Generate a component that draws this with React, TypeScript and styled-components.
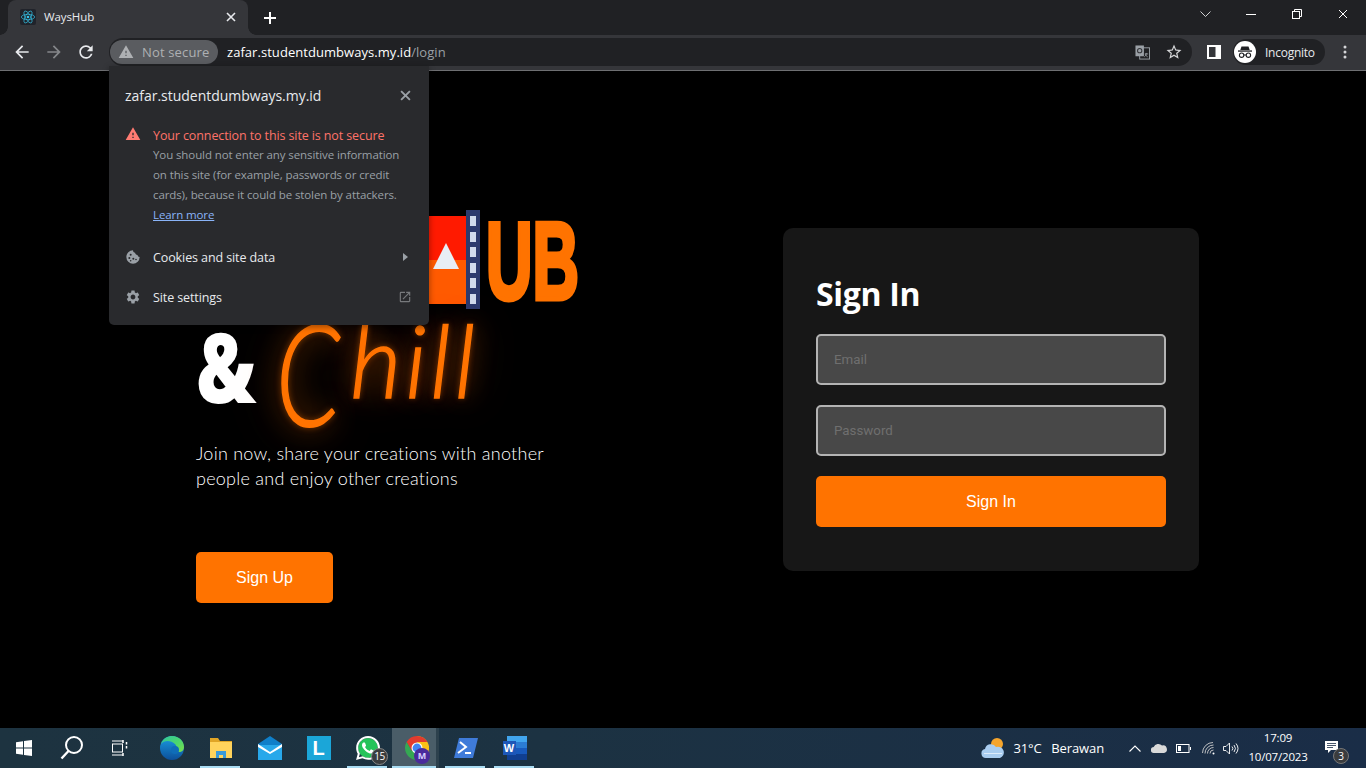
import React from "react";
import styled, { createGlobalStyle } from "styled-components";
import { SiWhatsapp } from "react-icons/si";

const Global = createGlobalStyle`
  html, body { margin: 0; padding: 0; background: #000; overflow: hidden; }
  * { box-sizing: border-box; }
`;

const ui = `"Open Sans", "Noto Sans", sans-serif`;
const orange = "#ff7300";

const Screen = styled.div`
  position: relative;
  width: 1366px;
  height: 768px;
  display: flex;
  flex-direction: column;
  font-family: ${ui};
  overflow: hidden;
`;

/* ---------- browser chrome ---------- */
const TabStrip = styled.div`
  height: 35px;
  flex: none;
  background: #202124;
  display: flex;
  align-items: stretch;
  padding-left: 8px;
`;
const Tab = styled.div`
  position: relative;
  width: 240px;
  background: #35363a;
  border-radius: 8px 8px 0 0;
  display: flex;
  align-items: center;
  padding: 0 9px 2px 12px;
  color: #e8eaed;
  font-size: 11.5px;
  &::before, &::after {
    content: "";
    position: absolute;
    bottom: 0;
    width: 8px;
    height: 8px;
    background: radial-gradient(circle at 0 0, #202124 7.5px, #35363a 8px);
  }
  &::before { left: -8px; }
  &::after { right: -8px; background: radial-gradient(circle at 100% 0, #202124 7.5px, #35363a 8px); }
`;
const Favicon = styled.span`
  width: 16px;
  height: 16px;
  border-radius: 2px;
  background: #20232a;
  display: flex;
  margin-right: 8px;
`;
const TabTitle = styled.span`
  flex: 1;
  letter-spacing: -0.1px;
`;
const IconBtn = styled.span<{ $w?: number; $c?: string; $ml?: number }>`
  width: ${(p) => p.$w ?? 16}px;
  margin-left: ${(p) => p.$ml ?? 0}px;
  flex: none;
  display: flex;
  align-items: center;
  justify-content: center;
  color: ${(p) => p.$c ?? "#e8eaed"};
`;
const NewTab = styled.span`
  width: 24px;
  margin-left: 10px;
  display: flex;
  align-items: center;
  justify-content: center;
  color: #fff;
`;
const WindowButtons = styled.div`
  margin-left: auto;
  display: flex;
  align-items: center;
  padding-bottom: 7px;
`;

const Toolbar = styled.div`
  height: 36px;
  flex: none;
  background: #35363a;
  border-bottom: 1px solid #6e6f72;
  display: flex;
  align-items: center;
  padding: 0 0 1px 6px;
`;
const NavBtn = styled.span<{ $c?: string }>`
  width: 32px;
  height: 28px;
  display: flex;
  align-items: center;
  justify-content: center;
  color: ${(p) => p.$c ?? "#e8eaed"};
`;
const Omnibox = styled.div`
  width: 1083px;
  height: 28px;
  margin-left: 7px;
  border-radius: 14px;
  background: #202124;
  display: flex;
  align-items: center;
  padding: 0 9px 0 1px;
  font-size: 13px;
`;
const Pill = styled.div`
  width: 108px;
  height: 24px;
  border-radius: 12px;
  background: #5a5c60;
  color: #aeb0b3;
  display: flex;
  align-items: center;
  gap: 8px;
  padding-left: 8px;
  letter-spacing: 0.15px;
`;
const Url = styled.span`
  margin-left: 9px;
  color: #fff;
  letter-spacing: 0.05px;
  flex: 1;
`;
const UrlPath = styled.span`
  color: #9aa0a6;
`;
const OmniIcons = styled.div`
  display: flex;
  align-items: center;
  gap: 15px;
`;
const Chip = styled.div`
  width: 92px;
  height: 26px;
  margin-left: 12px;
  border-radius: 13px;
  background: #202124;
  color: #e8eaed;
  display: flex;
  align-items: center;
  gap: 9px;
  padding-left: 1px;
  font-size: 12px;
  letter-spacing: -0.25px;
`;

/* ---------- page ---------- */
const Page = styled.main`
  flex: 1;
  background: #000;
  display: flex;
  align-items: center;
  padding-left: 196px;
`;
const Hero = styled.section`
  width: 587px;
  align-self: flex-start;
  padding-top: 139px;
  display: flex;
  flex-direction: column;
`;
const LogoRow = styled.div`
  height: 100px;
  padding-left: 200px;
  display: flex;
  align-items: flex-start;
`;
const Ub = styled.span`
  display: block;
  margin: -4px 0 0 6px;
  font: 700 110px/110px "Liberation Sans", sans-serif;
  color: ${orange};
  -webkit-text-stroke: 5px ${orange};
  transform: scaleX(0.585);
  transform-origin: left top;
`;
const ChillRow = styled.div`
  height: 119px;
  margin-top: 12px;
  display: flex;
  align-items: flex-start;
`;
const Amp = styled.span`
  font: 800 98px/72px "Open Sans", sans-serif;
  color: #fff;
  width: 80px;
  margin-top: 7px;
  transform: scaleX(0.77);
  transform-origin: left top;
`;
const Chill = styled.span`
  display: flex;
  align-items: flex-start;
  font: italic 300 100px/72px Lato, sans-serif;
  color: ${orange};
  -webkit-text-stroke: 1.4px ${orange};
  text-shadow: 0 0 6px rgba(255, 115, 0, 0.55), 0 0 24px rgba(255, 115, 0, 0.55), 0 0 44px rgba(255, 115, 0, 0.4);
`;
const ChillInitial = styled.span`
  width: 74px;
  font-size: 102px;
  transform: scaleY(1.38);
  transform-origin: left top;
`;
const ChillRest = styled.span`
  margin-top: 1px;
  letter-spacing: 3.6px;
`;
const Lead = styled.p`
  margin: 0;
  color: #fff;
  font: 300 18px/25px Lato, sans-serif;
  letter-spacing: 0.25px;
`;
const OrangeButton = styled.button<{ $w: number }>`
  width: ${(p) => p.$w}px;
  height: 51px;
  border: 0;
  border-radius: 5px;
  background: ${orange};
  color: #fff;
  font: 400 16px "Liberation Sans", Arial, sans-serif;
  padding: 0;
`;
const SignUp = styled(OrangeButton)`
  margin-top: 61px;
`;
const Card = styled.form`
  width: 416px;
  height: 343px;
  border-radius: 10px;
  background: #171717;
  padding: 44px 33px 0;
  display: flex;
  flex-direction: column;
`;
const CardTitle = styled.h1`
  margin: 0 0 19px;
  height: 43px;
  color: #fff;
  font: 700 32px/43px "Open Sans", sans-serif;
  letter-spacing: -0.3px;
`;
const Field = styled.input`
  width: 350px;
  height: 51px;
  margin-bottom: 20px;
  padding: 0 16px;
  border: 2px solid #b4b4b4;
  border-radius: 5px;
  background: #484848;
  color: #fff;
  font: 400 13.33px Roboto, sans-serif;
  outline: 0;
  &::placeholder { color: #6f6f6f; opacity: 1; }
`;

/* ---------- security popup ---------- */
const Popup = styled.aside`
  position: absolute;
  left: 109px;
  top: 66px;
  width: 320px;
  height: 259px;
  background: #292a2d;
  border-radius: 0 0 5px 5px;
  box-shadow: 0 2px 6px rgba(0, 0, 0, 0.4);
  padding: 19px 16px 0;
  color: #e8eaed;
`;
const PopHead = styled.div`
  height: 20px;
  display: flex;
  align-items: center;
  justify-content: space-between;
  font-size: 14px;
  letter-spacing: -0.02px;
`;
const Warn = styled.div`
  margin-top: 21px;
  display: flex;
  gap: 12px;
`;
const WarnText = styled.div`
  width: 260px;
  font-size: 11.5px;
  line-height: 20px;
  color: #9aa0a6;
  letter-spacing: -0.1px;
  white-space: nowrap;
`;
const WarnTitle = styled.div`
  font-size: 12.5px;
  letter-spacing: -0.11px;
  color: #ff7369;
  margin-bottom: -1px;
`;
const Learn = styled.a`
  color: #8ab4f8;
  text-decoration: underline;
  display: block;
`;
const MenuRow = styled.div<{ $top: number }>`
  height: 20px;
  margin-top: ${(p) => p.$top}px;
  display: flex;
  align-items: center;
  gap: 12px;
  font-size: 12.5px;
  letter-spacing: -0.1px;
  color: #e8eaed;
`;
const MenuLabel = styled.span`
  flex: 1;
`;
const MenuEnd = styled.span`
  width: 16px;
  display: flex;
  justify-content: center;
`;

/* ---------- taskbar ---------- */
const Taskbar = styled.footer`
  height: 40px;
  flex: none;
  background: linear-gradient(90deg, #1d3340 0%, #1c3242 40%, #1a2d47 100%);
  display: flex;
  align-items: stretch;
  color: #fff;
  font-size: 12px;
`;
const Slot = styled.div<{ $w?: number; $on?: boolean; $active?: boolean; $ml?: number }>`
  position: relative;
  width: ${(p) => p.$w ?? 49}px;
  margin-left: ${(p) => p.$ml ?? 0}px;
  flex: none;
  display: flex;
  align-items: center;
  justify-content: center;
  background: ${(p) =>
    p.$active
      ? "linear-gradient(90deg, #4a5d68 44px, #2d414d 44px, #2d414d 47px, transparent 47px)"
      : "transparent"};
  &::after {
    content: "";
    display: ${(p) => (p.$on ? "block" : "none")};
    position: absolute;
    bottom: 0;
    left: ${(p) => (p.$active ? 0 : 4)}px;
    right: 5px;
    height: 2px;
    background: #a9dcf3;
  }
`;
const Count = styled.span`
  position: absolute;
  left: 28px;
  top: 20px;
  width: 17px;
  height: 17px;
  border-radius: 50%;
  background: #3a3c3e;
  border: 1px solid #888;
  font-size: 10px;
  line-height: 15px;
  text-align: center;
  color: #fff;
  letter-spacing: -0.5px;
`;
const Avatar = styled.span`
  position: absolute;
  left: 22px;
  top: 20px;
  width: 16px;
  height: 16px;
  border-radius: 50%;
  background: #4a2a9c;
  font-size: 9px;
  font-weight: 700;
  line-height: 16px;
  text-align: center;
  color: #d8cfff;
`;
const LTile = styled.span`
  width: 24px;
  height: 24px;
  background: #1ba6d8;
  display: flex;
  align-items: center;
  justify-content: center;
  color: #fff;
  font: 700 20px "Liberation Sans", sans-serif;
`;
const WordDoc = styled.span`
  position: relative;
  width: 24px;
  height: 24px;
  display: flex;
  flex-direction: column;
  padding-left: 4px;
`;
const WordStripe = styled.span<{ $c: string }>`
  flex: 1;
  background: ${(p) => p.$c};
`;
const WordBadge = styled.span`
  position: absolute;
  left: 0;
  top: 5px;
  width: 13px;
  height: 14px;
  background: #1d57b8;
  color: #fff;
  font: 700 11px/14px "Liberation Sans", sans-serif;
  text-align: center;
`;
const Tray = styled.div`
  margin-left: auto;
  display: flex;
  align-items: center;
  padding-right: 15px;
`;
const TrayIcon = styled.span<{ $w: number }>`
  width: ${(p) => p.$w}px;
  display: flex;
  justify-content: center;
  flex: none;
`;
const Weather = styled.span`
  margin: 0 16px 0 8px;
  font-size: 13px;
  letter-spacing: -0.12px;
  white-space: nowrap;
`;
const Clock = styled.div`
  width: 66px;
  text-align: center;
  font-size: 11.5px;
  line-height: 19px;
  letter-spacing: -0.2px;
  padding-bottom: 3px;
  white-space: nowrap;
`;
const Notif = styled.span`
  position: relative;
  width: 40px;
  margin-top: -3px;
  display: flex;
  justify-content: center;
`;
const NotifCount = styled.span`
  position: absolute;
  left: 22px;
  top: 7px;
  width: 16px;
  height: 16px;
  border-radius: 50%;
  background: #3a3c3e;
  border: 1px solid #777;
  font-size: 10px;
  line-height: 14px;
  text-align: center;
`;

const Ic = ({ d, s = 16, c = "currentColor" }: { d: string; s?: number; c?: string }) => (
  <svg width={s} height={s} viewBox="0 0 24 24" fill={c} fillRule="evenodd"><path d={d} /></svg>
);
const CloseX = ({ s = 10, w = 1.6, c = "currentColor" }: { s?: number; w?: number; c?: string }) => (
  <svg width={s} height={s} viewBox="0 0 10 10" stroke={c} strokeWidth={w} fill="none"><path d="M1 1l8 8M9 1l-8 8" /></svg>
);

const P = {
  back: "M20 11H7.83l5.59-5.59L12 4l-8 8 8 8 1.41-1.41L7.83 13H20v-2z",
  fwd: "M4 11h12.17l-5.59-5.59L12 4l8 8-8 8-1.41-1.41L16.17 13H4v-2z",
  reload: "M17.65 6.35A7.958 7.958 0 0012 4c-4.42 0-7.99 3.58-7.99 8s3.57 8 7.99 8c3.73 0 6.84-2.55 7.73-6h-2.08A5.99 5.99 0 0112 18c-3.31 0-6-2.69-6-6s2.69-6 6-6c1.66 0 3.14.69 4.22 1.78L13 11h7V4l-2.35 2.35z",
  warn: "M1 21h22L12 2 1 21zm12-3h-2v-2h2v2zm0-4h-2v-4h2v4z",
  star: "M22 9.24l-7.19-.62L12 2 9.19 8.63 2 9.24l5.46 4.73L5.82 21 12 17.27 18.18 21l-1.63-7.03L22 9.24zM12 15.4l-3.76 2.27 1-4.28-3.32-2.88 4.38-.38L12 6.1l1.71 4.04 4.38.38-3.32 2.88 1 4.28L12 15.4z",
  gear: "M19.14 12.94c.04-.3.06-.61.06-.94 0-.32-.02-.64-.07-.94l2.03-1.58c.18-.14.23-.41.12-.61l-1.92-3.32c-.12-.22-.37-.29-.59-.22l-2.39.96c-.5-.38-1.03-.7-1.62-.94l-.36-2.54c-.04-.24-.24-.41-.48-.41h-3.84c-.24 0-.43.17-.47.41l-.36 2.54c-.59.24-1.13.57-1.62.94l-2.39-.96c-.22-.08-.47 0-.59.22L2.74 8.87c-.12.21-.08.47.12.61l2.03 1.58c-.05.3-.09.63-.09.94s.02.64.07.94l-2.03 1.58c-.18.14-.23.41-.12.61l1.92 3.32c.12.22.37.29.59.22l2.39-.96c.5.38 1.03.7 1.62.94l.36 2.54c.05.24.24.41.48.41h3.84c.24 0 .44-.17.47-.41l.36-2.54c.59-.24 1.13-.56 1.62-.94l2.39.96c.22.08.47 0 .59-.22l1.92-3.32c.12-.22.07-.47-.12-.61l-2.01-1.58zM12 15.6c-1.98 0-3.6-1.62-3.6-3.6s1.62-3.6 3.6-3.6 3.6 1.62 3.6 3.6-1.62 3.6-3.6 3.6z",
  open: "M19 19H5V5h7V3H5a2 2 0 00-2 2v14a2 2 0 002 2h14c1.1 0 2-.9 2-2v-7h-2v7zM14 3v2h3.59l-9.83 9.83 1.41 1.41L19 6.41V10h2V3h-7z",
  cookie: "M12 2a10 10 0 1010 10c-1.8 0-3-1.2-3.2-3-1.9.1-3.6-1.4-3.7-3.2C13.3 5.6 12 4 12 2zM8.5 7a1.5 1.5 0 110 3 1.5 1.5 0 010-3zm-2 5a1.5 1.5 0 110 3 1.5 1.5 0 010-3zm6 1a1.5 1.5 0 110 3 1.5 1.5 0 010-3zm-4 3.5a1.2 1.2 0 110 2.4 1.2 1.2 0 010-2.4zm8 -2a1.2 1.2 0 110 2.4 1.2 1.2 0 010-2.4z",
};

const ReactIcon = () => (
  <svg width="16" height="16" viewBox="-12 -12 24 24" fill="none" stroke="#35c3e8" strokeWidth="1">
    <circle r="2" fill="#35c3e8" stroke="none" />
    <ellipse rx="10" ry="4" />
    <ellipse rx="10" ry="4" transform="rotate(60)" />
    <ellipse rx="10" ry="4" transform="rotate(120)" />
  </svg>
);

const Translate = () => (
  <svg width="15" height="15" viewBox="0 0 16 16">
    <rect x="5" y="3" width="10.5" height="12" fill="none" stroke="#9aa0a6" strokeWidth="1" />
    <rect x="0.5" y="0.5" width="9" height="11.5" fill="#9aa0a6" />
    <circle cx="5" cy="6" r="2.3" fill="none" stroke="#35363a" strokeWidth="1.1" />
    <path d="M10.5 9.5h3.5M12 8.5c0 2-1 3.5-2 4M11 10c.4 1.2 1.4 2.2 2.5 2.6" fill="none" stroke="#9aa0a6" strokeWidth="0.9" />
  </svg>
);

const Incognito = () => (
  <svg width="22" height="22" viewBox="0 0 22 22">
    <circle cx="11" cy="11" r="11" fill="#fff" />
    <path d="M7.5 5.5h7l1.2 3.6H6.3z" fill="#202124" />
    <rect x="4" y="9.4" width="14" height="1.3" fill="#202124" />
    <circle cx="7.6" cy="14.2" r="2.2" fill="none" stroke="#202124" strokeWidth="1.1" />
    <circle cx="14.4" cy="14.2" r="2.2" fill="none" stroke="#202124" strokeWidth="1.1" />
    <path d="M9.8 14h2.4" stroke="#202124" strokeWidth="1.1" />
  </svg>
);

const Edge = () => (
  <svg width="24" height="24" viewBox="0 0 24 24">
    <defs>
      <linearGradient id="eg" x1="0" y1="0" x2="1" y2="1">
        <stop offset="0" stopColor="#2fc4a0" />
        <stop offset="0.6" stopColor="#4fd86a" />
        <stop offset="1" stopColor="#7ee04a" />
      </linearGradient>
      <linearGradient id="eb" x1="0" y1="0" x2="0" y2="1">
        <stop offset="0" stopColor="#1b9de2" />
        <stop offset="1" stopColor="#0c4f9a" />
      </linearGradient>
    </defs>
    <circle cx="12" cy="12" r="12" fill="url(#eb)" />
    <path d="M1 8C3 2 8 0 12 0c7 0 12 5 12 11 0 3-2 5-5 5-2 0-4-1-4-2 2-1 2-4 0-6C11 4 4 4 1 8z" fill="url(#eg)" />
    <circle cx="15" cy="14" r="4" fill="#0f6db8" />
  </svg>
);
const Folder = () => (
  <svg width="22" height="20" viewBox="0 0 22 20">
    <path d="M0 0h8l2 3h12v2H0z" fill="#e0a526" />
    <rect y="4" width="22" height="16" fill="#ffd35c" />
    <path d="M6 20v-7h10v7h-3v-3H9v3z" fill="#3a9ad9" />
  </svg>
);
const Mail = () => (
  <svg width="24" height="24" viewBox="0 0 24 24">
    <path d="M0 8L12 0l12 8v16H0z" fill="#0f7fc9" />
    <rect y="9" width="24" height="15" fill="#28a8ea" />
    <path d="M0 8l12 8 12-8v3L12 18 0 11z" fill="#fff" />
  </svg>
);
const Whats = () => (
  <svg width="24" height="24" viewBox="0 0 24 24">
    <circle cx="12" cy="12" r="10" fill="#25c35a" />
    <foreignObject width="24" height="24"><SiWhatsapp size={24} color="#fff" /></foreignObject>
  </svg>
);
const ChromeLogo = () => (
  <svg width="24" height="24" viewBox="-12 -12 24 24">
    <path d="M0-12A12 12 0 0 1 10.4-6H0z" fill="#f4b400" />
    <path d="M0-12A12 12 0 0 0-10.4-6L-5.2 3 0-6H10.4A12 12 0 0 0 0-12z" fill="#e33b2e" />
    <path d="M-10.4-6A12 12 0 0 0-1.5 11.9L3.5 3-5.2 3z" fill="#35a853" />
    <path d="M10.4-6H0L5.2 3-1.5 11.9A12 12 0 0 0 10.4-6z" fill="#fbc116" />
    <circle r="5.5" fill="#fff" />
    <circle r="4.4" fill="#4285f4" />
  </svg>
);
const Shell = () => (
  <svg width="24" height="20" viewBox="0 0 24 20">
    <path d="M5 0h19l-5 20H0z" fill="#3f7bd9" />
    <path d="M6 4l6 5-8 6" fill="none" stroke="#fff" strokeWidth="2" />
    <path d="M11 15h6" stroke="#fff" strokeWidth="2" />
  </svg>
);
const StartLogo = () => (
  <svg width="16" height="16" viewBox="0 0 16 16" fill="#fff">
    <path d="M0 2.3l7-1v6.3H0zM8 1.1L16 0v7.6H8zM0 8.5h7v6.3l-7-1zM8 8.5h8V16l-8-1.1z" />
  </svg>
);
const SearchIc = () => (
  <svg width="24" height="24" viewBox="0 0 24 24" fill="none" stroke="#fff" strokeWidth="2">
    <circle cx="14" cy="9" r="8" />
    <path d="M8.5 15L1.5 22.5" strokeWidth="2.4" />
  </svg>
);
const TaskView = () => (
  <svg width="16" height="16" viewBox="0 0 16 16" fill="none" stroke="#fff" strokeWidth="1">
    <path d="M0 1h11M0 15h11" />
    <rect x="0.5" y="4" width="10" height="8" />
    <path d="M11 0v3M11 13v3M14.5 2v2.5M14.5 6v2.5" strokeWidth="1.5" />
  </svg>
);
const WeatherIc = () => (
  <svg width="24" height="22" viewBox="0 0 24 22">
    <circle cx="16" cy="7" r="6" fill="#f6a52c" />
    <path d="M5 21a4.5 4.5 0 01-1-8.9A6 6 0 0115 10a5 5 0 014 11z" fill="#a9cdf0" />
    <path d="M3 16h18v1H3z" fill="#ddecfb" />
  </svg>
);
const TrayGlyphs = {
  chevron: <svg width="12" height="7" viewBox="0 0 12 7" fill="none" stroke="#fff" strokeWidth="1.1"><path d="M.5 6.5L6 1l5.5 5.5" /></svg>,
  cloud: <svg width="16" height="10" viewBox="0 0 16 10" fill="#d9d9d9"><path d="M3 10a3 3 0 01-.3-6A5 5 0 0111 2.5 3.8 3.8 0 0113 10z" /></svg>,
  battery: (
    <svg width="15" height="9" viewBox="0 0 15 9" fill="none" stroke="#fff">
      <rect x="0.5" y="0.5" width="12.5" height="8" />
      <path d="M14.5 3v3" />
      <rect x="2" y="2" width="3" height="5" fill="#fff" stroke="none" />
    </svg>
  ),
  wifi: (
    <svg width="13" height="13" viewBox="0 0 13 13" fill="none" stroke="#cfcfcf" strokeWidth="0.9">
      <path d="M.5 11A10.5 10.5 0 0111 .5M3 11.5A8.5 8.5 0 0111.5 3M5.5 11.5A6 6 0 0111.5 5.5M8 11.5A3.5 3.5 0 0111.5 8" />
      <circle cx="11.5" cy="11.5" r="1" fill="#fff" stroke="none" />
    </svg>
  ),
  speaker: (
    <svg width="16" height="13" viewBox="0 0 16 13" fill="none" stroke="#fff" strokeWidth="0.9">
      <path d="M.5 4.5h2.5L6.5 1v11L3 8.5H.5z" />
      <path d="M9 4.5a3 3 0 010 4M11 3a5.5 5.5 0 010 7M13 1.5a8 8 0 010 10" />
    </svg>
  ),
};

export default function App() {
  return (
    <Screen>
      <Global />
      <TabStrip>
        <Tab>
          <Favicon><ReactIcon /></Favicon>
          <TabTitle>WaysHub</TabTitle>
          <IconBtn><CloseX /></IconBtn>
        </Tab>
        <NewTab>
          <svg width="12" height="12" viewBox="0 0 12 12" stroke="#fff" strokeWidth="2"><path d="M6 0v12M0 6h12" /></svg>
        </NewTab>
        <WindowButtons>
          <IconBtn $w={46}><svg width="11" height="6" viewBox="0 0 11 6" fill="none" stroke="#cfd0d2"><path d="M.5.5l5 5 5-5" /></svg></IconBtn>
          <IconBtn $w={46}><svg width="10" height="1" viewBox="0 0 10 1"><rect width="10" height="1" fill="#fff" /></svg></IconBtn>
          <IconBtn $w={46}><svg width="10" height="10" viewBox="0 0 10 10" fill="none" stroke="#fff"><path d="M2.5 2V.5h7v7H8" /><rect x="0.5" y="2.5" width="7" height="7" /></svg></IconBtn>
          <IconBtn $w={46}><CloseX c="#fff" s={10} w={1} /></IconBtn>
        </WindowButtons>
      </TabStrip>
      <Toolbar>
        <NavBtn><Ic d={P.back} s={20} /></NavBtn>
        <NavBtn $c="#85878a"><Ic d={P.fwd} s={20} /></NavBtn>
        <NavBtn><Ic d={P.reload} s={20} /></NavBtn>
        <Omnibox>
          <Pill><Ic d={P.warn} s={16} c="#aeb0b3" /><span>Not secure</span></Pill>
          <Url>zafar.studentdumbways.my.id<UrlPath>/login</UrlPath></Url>
          <OmniIcons>
            <Translate />
            <Ic d={P.star} s={18} c="#d5d6d8" />
          </OmniIcons>
        </Omnibox>
        <IconBtn $w={14} $ml={15}>
          <svg width="14" height="14" viewBox="0 0 14 14"><rect width="14" height="14" fill="#fff" /><rect x="2" y="2" width="6.5" height="10" fill="#35363a" /></svg>
        </IconBtn>
        <Chip><Incognito /><span>Incognito</span></Chip>
        <IconBtn $w={20} $c="#e8eaed" $ml={10}>
          <svg width="4" height="14" viewBox="0 0 4 14" fill="#d5d6d8"><circle cx="2" cy="2" r="1.5" /><circle cx="2" cy="7" r="1.5" /><circle cx="2" cy="12" r="1.5" /></svg>
        </IconBtn>
      </Toolbar>

      <Page>
        <Hero>
          <LogoRow>
            <svg width="84" height="100" viewBox="0 0 84 100">
              <rect x="0" y="6" width="70" height="44" fill="#ff1a00" />
              <rect x="0" y="50" width="70" height="44" fill="#ff5a00" />
              <path d="M50 33l13 26H37z" fill="#e8eef5" />
              <rect x="70" y="0" width="14" height="99" fill="#2c3a6e" />
              {[6, 22, 37, 53, 68, 84].map((y) => (
                <rect key={y} x="74" y={y} width="6" height="10" fill="#d0daec" />
              ))}
            </svg>
            <Ub>UB</Ub>
          </LogoRow>
          <ChillRow>
            <Amp>&amp;</Amp>
            <Chill><ChillInitial>C</ChillInitial><ChillRest>hill</ChillRest></Chill>
          </ChillRow>
          <Lead>Join now, share your creations with another<br />people and enjoy other creations</Lead>
          <SignUp type="button" $w={137}>Sign Up</SignUp>
        </Hero>
        <Card>
          <CardTitle>Sign In</CardTitle>
          <Field placeholder="Email" />
          <Field placeholder="Password" />
          <OrangeButton type="button" $w={350}>Sign In</OrangeButton>
        </Card>
      </Page>

      <Taskbar>
        <Slot $w={48}><StartLogo /></Slot>
        <Slot $w={48}><SearchIc /></Slot>
        <Slot $w={48}><TaskView /></Slot>
        <Slot $ml={3}><Edge /></Slot>
        <Slot $on><Folder /></Slot>
        <Slot><Mail /></Slot>
        <Slot><LTile>L</LTile></Slot>
        <Slot $on><Whats /><Count>15</Count></Slot>
        <Slot $on $active><ChromeLogo /><Avatar>M</Avatar></Slot>
        <Slot $on><Shell /></Slot>
        <Slot $on>
          <WordDoc>
            <WordStripe $c="#41a5ee" />
            <WordStripe $c="#2b7cd3" />
            <WordStripe $c="#185abd" />
            <WordStripe $c="#103f91" />
            <WordBadge>W</WordBadge>
          </WordDoc>
        </Slot>
        <Tray>
          <WeatherIc />
          <Weather>31°C&nbsp;&nbsp;&nbsp;Berawan</Weather>
          <TrayIcon $w={30}>{TrayGlyphs.chevron}</TrayIcon>
          <TrayIcon $w={18}>{TrayGlyphs.cloud}</TrayIcon>
          <TrayIcon $w={31}>{TrayGlyphs.battery}</TrayIcon>
          <TrayIcon $w={18}>{TrayGlyphs.wifi}</TrayIcon>
          <TrayIcon $w={28}>{TrayGlyphs.speaker}</TrayIcon>
          <Clock>17:09<br />10/07/2023</Clock>
          <Notif>
            <svg width="13" height="12" viewBox="0 0 13 12" fill="#fff"><path d="M0 0h13v9H6l-3 3V9H0z" /><path d="M2 2.5h9M2 4.5h9M2 6.5h6" stroke="#1a2d47" strokeWidth="0.8" /></svg>
            <NotifCount>3</NotifCount>
          </Notif>
        </Tray>
      </Taskbar>

      <Popup>
        <PopHead>
          <span>zafar.studentdumbways.my.id</span>
          <IconBtn $w={16} $c="#9aa0a6"><CloseX s={11} w={1.7} /></IconBtn>
        </PopHead>
        <Warn>
          <Ic d={P.warn} s={16} c="#ff7b72" />
          <WarnText>
            <WarnTitle>Your connection to this site is not secure</WarnTitle>
            You should not enter any sensitive information<br />
            on this site (for example, passwords or credit<br />
            cards), because it could be stolen by attackers.<br />
            <Learn>Learn more</Learn>
          </WarnText>
        </Warn>
        <MenuRow $top={22}>
          <Ic d={P.cookie} s={16} c="#9aa0a6" />
          <MenuLabel>Cookies and site data</MenuLabel>
          <MenuEnd><svg width="5" height="8" viewBox="0 0 5 8" fill="#9aa0a6"><path d="M0 0l5 4-5 4z" /></svg></MenuEnd>
        </MenuRow>
        <MenuRow $top={20}>
          <Ic d={P.gear} s={16} c="#9aa0a6" />
          <MenuLabel>Site settings</MenuLabel>
          <MenuEnd><Ic d={P.open} s={14} c="#77797c" /></MenuEnd>
        </MenuRow>
      </Popup>
    </Screen>
  );
}
